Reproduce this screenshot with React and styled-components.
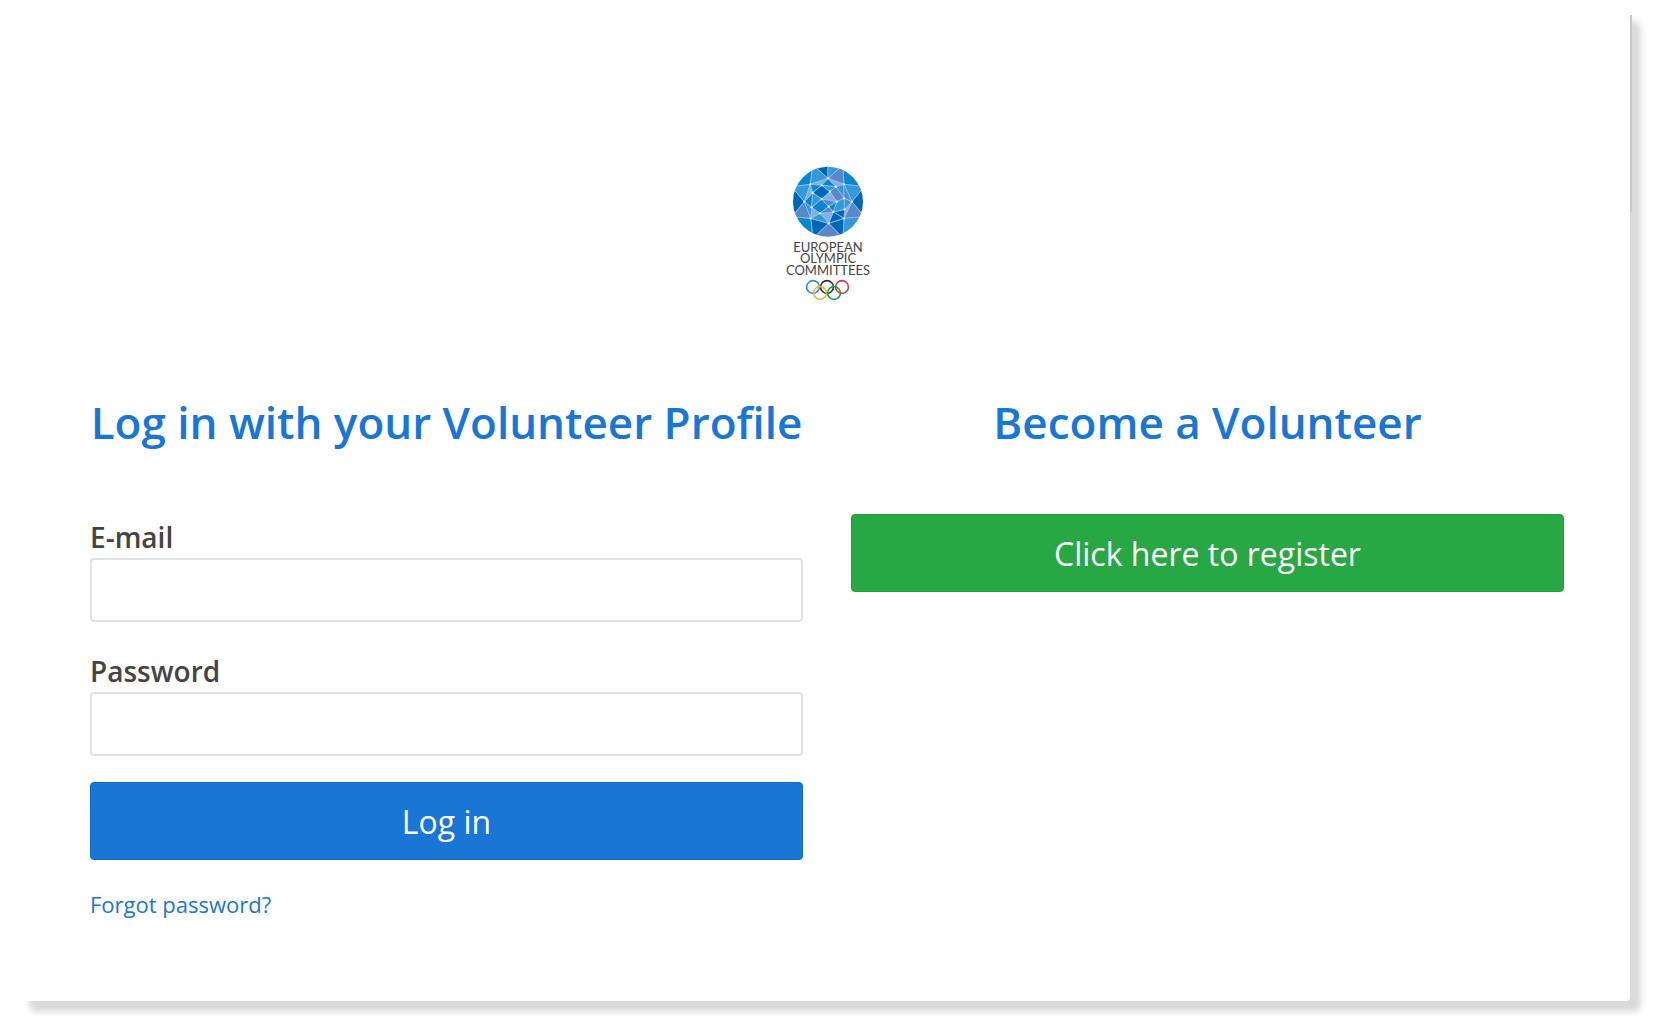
import React from "react";
import styled, { createGlobalStyle } from "styled-components";

const GlobalStyle = createGlobalStyle`
  *, *::before, *::after { box-sizing: border-box; }
  body {
    margin: 0;
    background: #fff;
    color: #444;
    font-family: "Open Sans", "Noto Sans", sans-serif;
  }
`;

const Page = styled.div`
  display: flex;
  min-height: 100vh;
  padding: 15px 26px 15px 24px;
`;

const Card = styled.main`
  position: relative;
  flex: 1;
  padding: 144px 66px 72px;
  background: #fff;
  border-radius: 4px 8px 4px 4px;
  box-shadow: 8px 8px 6px 3px #dadada;

  &::after {
    content: "";
    position: absolute;
    top: 0;
    right: -2px;
    width: 2px;
    height: 197px;
    background: #c8c8c8;
  }
`;

const LogoBar = styled.header`
  display: flex;
  justify-content: center;
  margin-bottom: 87px;
`;

const LogoArt = styled.svg`
  display: block;
  width: 120px;
  height: 144px;
`;

const LogoText = styled.text`
  font-family: Lato, sans-serif;
  font-size: 13px;
  fill: #444;
  text-anchor: middle;
`;

const Columns = styled.div`
  display: grid;
  grid-template-columns: repeat(2, minmax(0, 1fr));
  gap: 48px;
`;

const Column = styled.section`
  display: flex;
  flex-direction: column;
`;

const Title = styled.h1`
  margin: 0 0 60px;
  color: #1976d5;
  font-size: 44px;
  font-weight: 600;
  line-height: 64px;
  text-align: center;
  white-space: nowrap;
`;

const Form = styled.form`
  display: flex;
  flex-direction: column;
`;

const Field = styled.div`
  display: flex;
  flex-direction: column;
  margin-bottom: 26px;
`;

const Label = styled.label`
  padding: 4px 0 2px;
  font-size: 28px;
  font-weight: 600;
  line-height: 38px;
`;

const Input = styled.input`
  width: 100%;
  height: 64px;
  padding: 8px 16px;
  border: 2px solid #dfe3e7;
  border-radius: 4px;
  background: #fff;
  color: inherit;
  font: inherit;
  font-size: 28px;
`;

const Button = styled.button`
  width: 100%;
  height: 78px;
  padding: 2px 0 0;
  border: 1px solid ${(p) => (p.$tone === "success" ? "#1fa03b" : "#0f6bc9")};
  border-radius: 4px;
  background: ${(p) => (p.$tone === "success" ? "#28a745" : "#1976d5")};
  color: #fff;
  font-family: inherit;
  font-size: 32px;
  line-height: 48px;
`;

const ForgotLink = styled.a`
  align-self: flex-start;
  margin-top: 28px;
  color: #1976d5;
  font-size: 22px;
  line-height: 32px;
  text-decoration: none;
`;

const TONES = { d: "#0067b4", m: "#0a86cc", b: "#3399d8", l: "#80b2e4", p: "#5a87ca" };

/* Corners of the facets inside the globe, on a 212-unit wide disc centred at 174,155. */
const N = {
  A: [174, 85], B: [222, 103], C: [246, 155], D: [222, 205],
  E: [176, 220], F: [122, 205], G: [103, 155], H: [121, 103],
  a: [155, 106], b: [198, 110], c: [222, 145], d: [224, 178],
  e: [190, 186], f: [150, 190], g: [125, 172], h: [128, 128],
  i: [155, 147], j: [180, 125], k: [200, 155], l: [176, 170],
};

const innerFacets = [
  ["HAa", "l"], ["Aab", "m"], ["ABb", "l"], ["Bbc", "b"], ["BCc", "p"],
  ["Ccd", "b"], ["CDd", "l"], ["Dde", "d"], ["DEe", "d"], ["Eef", "l"],
  ["EFf", "b"], ["Ffg", "l"], ["FGg", "b"], ["Ggh", "m"], ["GHh", "l"],
  ["Hha", "m"], ["ahij", "d"], ["abj", "b"], ["bckj", "p"], ["jik", "l"],
  ["igfl", "m"], ["ikl", "p"], ["kcde", "b"], ["lke", "m"], ["fel", "p"],
  ["hgi", "b"],
];

const rim = Array.from({ length: 8 }, (_, i) => {
  const a = ((i * 45 - 67.5) * Math.PI) / 180;
  return [174 + 118 * Math.cos(a), 155 + 118 * Math.sin(a)];
});
const top = [174, 40];

const ringKeys = "ABCDEFGH";
const outwardTones = "pmdbpmdm";
const inwardTones = "pbpddpbb";
const rimFacets = [];
for (let i = 0; i < 8; i += 1) {
  const from = rim[(i + 7) % 8];
  const to = rim[i];
  const node = N[ringKeys[i]];
  const nextNode = N[ringKeys[(i + 1) % 8]];
  if (i === 0) {
    rimFacets.push([[from, top, node], "d"], [[top, to, node], "b"]);
  } else {
    rimFacets.push([[from, to, node], outwardTones[i]]);
  }
  rimFacets.push([[to, node, nextNode], inwardTones[i]]);
}

const facets = [
  ...rimFacets,
  ...innerFacets.map(([keys, tone]) => [keys.split("").map((k) => N[k]), tone]),
];

const rings = [
  [46, 128, "#2f8fd8"],
  [60, 128, "#333"],
  [75, 128, "#e6334f"],
  [53, 134, "#f5b13a"],
  [67, 134, "#1c9c52"],
];

function Logo() {
  return (
    <LogoArt viewBox="0 0 120 144" role="img" aria-label="European Olympic Committees">
      <defs>
        <clipPath id="globe">
          <circle cx="174" cy="155" r="105" />
        </clipPath>
      </defs>
      <g transform="translate(3 -9) scale(0.3333)" clipPath="url(#globe)">
        {facets.map(([points, tone], i) => (
          <polygon
            key={i}
            points={points.map((p) => p.join(",")).join(" ")}
            fill={TONES[tone]}
            stroke="#8fc0e8"
            strokeWidth="2.4"
          />
        ))}
        {Object.entries(N).map(([key, [x, y]]) => (
          <circle key={key} cx={x} cy={y} r="3.6" fill="#dceefa" />
        ))}
      </g>
      <LogoText x="61" y="93">EUROPEAN</LogoText>
      <LogoText x="61" y="104">OLYMPIC</LogoText>
      <LogoText x="61" y="116">COMMITTEES</LogoText>
      {rings.map(([cx, cy, color]) => (
        <circle key={color} cx={cx} cy={cy} r="6.4" fill="none" stroke={color} strokeWidth="1.6" />
      ))}
    </LogoArt>
  );
}

export default function App() {
  return (
    <>
      <GlobalStyle />
      <Page>
        <Card>
          <LogoBar>
            <Logo />
          </LogoBar>
          <Columns>
            <Column>
              <Title>Log in with your Volunteer Profile</Title>
              <Form onSubmit={(e) => e.preventDefault()}>
                <Field>
                  <Label htmlFor="email">E-mail</Label>
                  <Input id="email" type="email" />
                </Field>
                <Field>
                  <Label htmlFor="password">Password</Label>
                  <Input id="password" type="password" />
                </Field>
                <Button type="submit">Log in</Button>
                <ForgotLink href="#forgot">Forgot password?</ForgotLink>
              </Form>
            </Column>
            <Column>
              <Title>Become a Volunteer</Title>
              <Button type="button" $tone="success">Click here to register</Button>
            </Column>
          </Columns>
        </Card>
      </Page>
    </>
  );
}
